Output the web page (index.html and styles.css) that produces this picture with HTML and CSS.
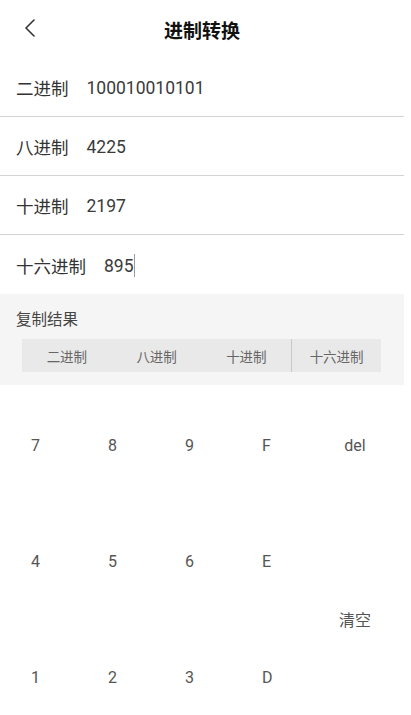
FILE: index.html
```html
<!DOCTYPE html>
<html lang="zh-CN">
<head>
<meta charset="utf-8">
<title>进制转换</title>
<link rel="stylesheet" href="styles.css">
</head>
<body>
<div class="page">
  <header class="header">
    <span class="back">
      <svg width="12" height="18" viewBox="0 0 12 18"><path d="M10 1 L2 9 L10 17" fill="none" stroke="#333" stroke-width="1.6" stroke-linecap="round" stroke-linejoin="round"/></svg>
    </span>
    <h1 class="title">进制转换</h1>
  </header>

  <div class="fields">
    <div class="field"><span class="label">二进制</span><span class="value">100010010101</span></div>
    <div class="field"><span class="label">八进制</span><span class="value">4225</span></div>
    <div class="field"><span class="label">十进制</span><span class="value">2197</span></div>
    <div class="field last"><span class="label">十六进制</span><span class="value">895</span><span class="cursor"></span></div>
  </div>

  <section class="copy">
    <div class="copy-title">复制结果</div>
    <div class="copy-bar">
      <span class="copy-btn">二进制</span>
      <span class="copy-btn">八进制</span>
      <span class="copy-btn">十进制</span>
      <span class="copy-btn sep">十六进制</span>
    </div>
  </section>

  <div class="keypad">
    <span class="key">7</span>
    <span class="key">8</span>
    <span class="key">9</span>
    <span class="key">F</span>
    <span class="key side">del</span>
    <span class="key">4</span>
    <span class="key">5</span>
    <span class="key">6</span>
    <span class="key">E</span>
    <span class="key side tall">清空</span>
    <span class="key">1</span>
    <span class="key">2</span>
    <span class="key">3</span>
    <span class="key">D</span>
  </div>
</div>
</body>
</html>
```

FILE: styles.css
```css
html, body {
  margin: 0;
  padding: 0;
  background: #ffffff;
  overflow: hidden;
}

body {
  font-family: Roboto, "Noto Sans CJK SC", sans-serif;
  color: #333333;
}

.page {
  width: 404px;
}

.header {
  height: 58px;
  display: flex;
  align-items: center;
  justify-content: center;
  position: relative;
}

.back {
  position: absolute;
  left: 24px;
  top: 19px;
  display: flex;
}

.title {
  margin: 0;
  font-size: 19px;
  font-weight: 700;
  color: #111111;
  padding-top: 1px;
}

.field {
  height: 59px;
  box-sizing: border-box;
  border-bottom: 1.5px solid #d3d3d3;
  display: flex;
  align-items: center;
  padding-left: 16px;
  padding-top: 1px;
  font-size: 17.5px;
}

.field.last {
  border-bottom: none;
  padding-top: 2px;
}

.label {
  color: #333333;
  margin-right: 18px;
}

.value {
  color: #3a3a3a;
}

.cursor {
  width: 1.5px;
  height: 23px;
  background: #9a9a9a;
  margin-left: 0;
}

.copy {
  background: #f5f5f5;
  padding: 15px 23px 13px 22px;
}

.copy-title {
  font-size: 15.5px;
  color: #444444;
  margin-left: -6px;
  line-height: 22px;
}

.copy-bar {
  margin-top: 8px;
  height: 33px;
  display: grid;
  grid-template-columns: repeat(4, 1fr);
  background: #e9e9e9;
}

.copy-btn {
  display: flex;
  align-items: center;
  justify-content: center;
  font-size: 13.5px;
  color: #666666;
}

.copy-btn.sep {
  border-left: 1.5px solid #c8c8c8;
}

.keypad {
  display: grid;
  grid-template-columns: repeat(4, 77px) 32px;
  grid-auto-rows: 116px;
  padding-left: 31px;
  margin-top: 2px;
}

.key {
  display: flex;
  align-items: center;
  font-size: 16px;
  color: #555555;
}

.key.side {
  justify-content: center;
}

.key.tall {
  grid-row: span 2;
}
```
